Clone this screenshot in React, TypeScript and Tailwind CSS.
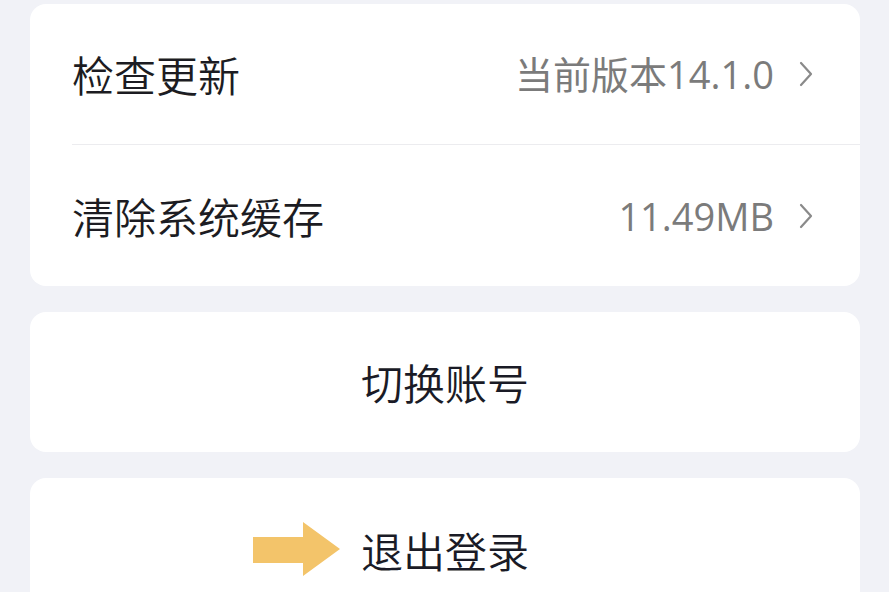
import React from 'react';

const font = { fontFamily: '"Noto Sans CJK SC", "Noto Sans", sans-serif' };
const valueFont = { fontFamily: '"Open Sans", "Noto Sans CJK SC", sans-serif' };

function Chevron() {
  return (
    <svg width="16" height="28" viewBox="0 0 16 28" fill="none" className="shrink-0">
      <path d="M3 3 L13 14 L3 25" stroke="#8a8a8a" strokeWidth="2.2" strokeLinecap="round" strokeLinejoin="round" />
    </svg>
  );
}

function Row({ label, value, divider }: { label: string; value: string; divider?: boolean }) {
  return (
    <div className={`ml-[42px] h-[141px] shrink-0 flex items-center pr-[46px] ${divider ? 'border-b border-[#ececef]' : ''}`}>
      <span className="text-[42px] font-[350] text-[#1c1c22] leading-none">{label}</span>
      <div className="ml-auto flex items-center gap-[24px]">
        <span className="text-[38px] text-[#7b7b7b] leading-none" style={valueFont}>{value}</span>
        <Chevron />
      </div>
    </div>
  );
}

function YellowArrow() {
  return (
    <svg width="88" height="56" viewBox="0 0 88 56" className="shrink-0">
      <path d="M0 15 H50 V0 L87 27 L50 54 V41 H0 Z" fill="#f3c46a" />
    </svg>
  );
}

export default function App() {
  return (
    <main className="w-[889px] h-[592px] overflow-hidden bg-[#f1f2f7] px-[30px] pt-[4px] flex flex-col gap-[26px]" style={font}>
      <section className="w-[830px] shrink-0 bg-white rounded-[16px] flex flex-col">
        <Row label="检查更新" value="当前版本14.1.0" divider />
        <Row label="清除系统缓存" value="11.49MB" />
      </section>

      <section className="w-[830px] h-[140px] shrink-0 bg-white rounded-[16px] flex items-center justify-center">
        <span className="text-[42px] font-[350] text-[#1a1b26] leading-none">切换账号</span>
      </section>

      <section className="w-[830px] h-[144px] shrink-0 bg-white rounded-[16px] flex items-center justify-center relative">
        <div className="absolute left-[223px] top-[44px]">
          <YellowArrow />
        </div>
        <span className="text-[42px] font-[350] text-[#1a1b26] leading-none">退出登录</span>
      </section>
    </main>
  );
}
